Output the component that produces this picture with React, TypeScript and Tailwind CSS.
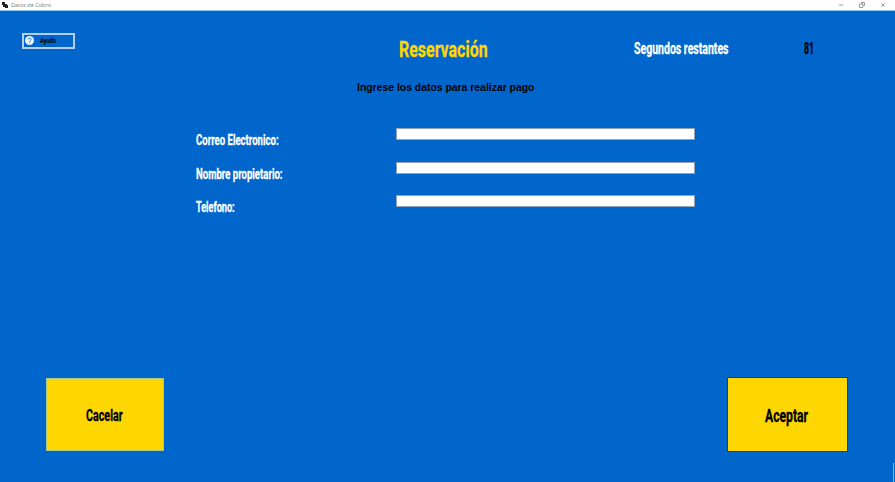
import React from "react";
import { Copy, Minus, X } from "lucide-react";

function Label({ box, text, children }: { box: string; text: string; children: React.ReactNode }) {
  return (
    <div className={`shrink-0 whitespace-nowrap ${box}`}>
      <span className={`block w-fit origin-left font-bold ${text}`}>{children}</span>
    </div>
  );
}

function Field({ label, scale }: { label: string; scale: string }) {
  return (
    <div className="flex h-[33.5px] items-start">
      <Label
        box="w-[200px] pt-[3px]"
        text={`text-[15px] leading-[18px] text-white [-webkit-text-stroke:0.3px_currentColor] ${scale}`}
      >
        {label}
      </Label>
      <input className="block h-[12px] w-[299px] border border-[#8fa3b8] bg-white text-[8px] outline-none" />
    </div>
  );
}

export default function App() {
  return (
    <div className="relative flex h-[482px] w-[895px] flex-col overflow-hidden bg-[#0066cc] font-['Roboto','Liberation_Sans',sans-serif]">
      <header className="flex h-[11px] shrink-0 items-center justify-between border-b border-[#8fc4ec] bg-white pr-[9px] pl-[2px]">
        <div className="flex items-center gap-[3px]">
          <svg width="6" height="6" viewBox="0 0 6 6">
            <path d="M0 0h3v2h2v1h1v3H3V5H1V3H0z" fill="#222" />
          </svg>
          <span className="font-['Open_Sans',sans-serif] text-[5.5px] leading-[8px] text-[#777]">
            Datos de Cobro
          </span>
        </div>
        <div className="flex items-center gap-[15px] text-[#777]">
          <Minus size={6} strokeWidth={3} />
          <Copy size={6} strokeWidth={3} className="-scale-x-100" />
          <X size={6} strokeWidth={3} />
        </div>
      </header>

      <div className="flex h-[68px] shrink-0 items-start pt-[22px] pl-[22px]">
        <button className="mr-[324px] flex h-[16px] w-[53px] items-center border-2 border-[#b4cdea] pl-[1px]">
          <svg width="9" height="9" viewBox="0 0 18 18" className="relative -top-px shrink-0">
            <circle cx="9" cy="9" r="9" fill="#eef5fd" />
            <path d="M6 7a3 3 0 1 1 4.500 2.500Q9 10.300 9 11.500" fill="none" stroke="#3475bd" strokeWidth="2" />
            <circle cx="9" cy="14" r="1.200" fill="#3475bd" />
          </svg>
          <Label box="w-[16px] ml-[6px] pt-px" text="text-[7px] leading-[9px] text-black scale-x-[0.8]">
            Ayuda
          </Label>
        </button>
        <Label
          box="w-[235px] pt-[3px]"
          text="text-[22px] leading-[28px] text-[#ffd700] scale-x-[0.725] [-webkit-text-stroke:0.3px_currentColor]"
        >
          Reservación
        </Label>
        <Label
          box="w-[170px] pt-[6px]"
          text="text-[16px] leading-[20px] text-white scale-x-[0.658] [-webkit-text-stroke:0.3px_currentColor]"
        >
          Segundos restantes
        </Label>
        <Label
          box="w-[20px] pt-[6px]"
          text="text-[16px] leading-[20px] text-black scale-x-[0.55] [-webkit-text-stroke:0.3px_currentColor]"
        >
          81
        </Label>
      </div>

      <Label
        box="h-[49px] pl-[357px] pt-[2px]"
        text="font-['Liberation_Sans',sans-serif] text-[10px] leading-[14px] text-black scale-x-[1.04]"
      >
        Ingrese los datos para realizar pago
      </Label>

      <form className="flex h-[249px] shrink-0 flex-col pl-[196px]">
        <Field label="Correo Electronico:" scale="scale-x-[0.638]" />
        <Field label="Nombre propietario:" scale="scale-x-[0.638]" />
        <Field label="Telefono:" scale="scale-x-[0.605]" />
      </form>

      <div className="flex items-start justify-between pr-[47px] pl-[46px]">
        <button className="mt-[1px] flex h-[73px] w-[118px] items-center border border-[#a9c98a] bg-[#ffd700] pt-[2px] pl-[39px]">
          <Label
            box="w-[38px]"
            text="text-[16px] leading-[20px] text-black scale-x-[0.67] [-webkit-text-stroke:0.3px_currentColor]"
          >
            Cacelar
          </Label>
        </button>
        <button className="flex h-[75px] w-[121px] items-center border border-[#263f52] bg-[#ffd700] pt-[2px] pl-[37px]">
          <Label
            box="w-[44px]"
            text="text-[18px] leading-[22px] text-black scale-x-[0.675] [-webkit-text-stroke:0.3px_currentColor]"
          >
            Aceptar
          </Label>
        </button>
      </div>

      <div className="absolute right-px bottom-0 h-[19px] w-px bg-[#f79433]" />
    </div>
  );
}
